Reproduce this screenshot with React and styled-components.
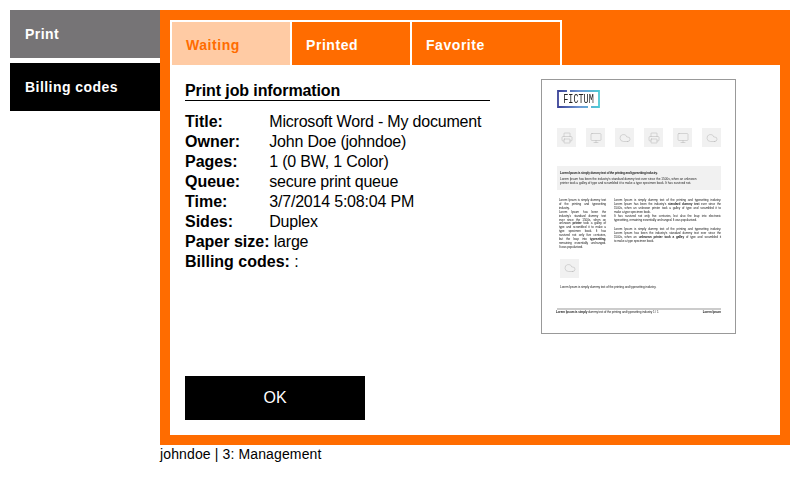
import React from "react";
import styled, { createGlobalStyle } from "styled-components";
import { Printer, Monitor, Cloud } from "lucide-react";

const GlobalStyle = createGlobalStyle`
  html, body {
    margin: 0;
    background: #fff;
    font-family: "Liberation Sans", Arial, sans-serif;
    color: #000;
  }
`;

const Page = styled.div`
  width: 800px;
  height: 480px;
  box-sizing: border-box;
  padding: 10px;
  display: flex;
  overflow: hidden;
`;

const Sidebar = styled.nav`
  width: 150px;
  display: flex;
  flex-direction: column;
  gap: 5px;
`;

const NavItem = styled.div`
  height: 48px;
  box-sizing: border-box;
  padding: 16px 0 0 15px;
  font-size: 14px;
  line-height: 16px;
  font-weight: bold;
  letter-spacing: 0.45px;
  color: #fff;
  background: ${(p) => (p.$active ? "#767476" : "#000")};
`;

const Main = styled.div`
  width: 630px;
`;

const Card = styled.div`
  height: 435px;
  box-sizing: border-box;
  border: 10px solid #ff6c00;
  background: #fff;
  display: flex;
  flex-direction: column;
`;

const Tabs = styled.div`
  height: 45px;
  flex: none;
  display: flex;
  background: #ff6c00;
`;

const Tab = styled.div`
  width: ${(p) => p.$width}px;
  box-sizing: border-box;
  padding: 15px 0 0 14px;
  border-top: 2px solid #fff;
  border-right: 2px solid #fff;
  border-left: ${(p) => (p.$first ? "2px solid #fff" : "0")};
  font-size: 14px;
  line-height: 16px;
  font-weight: bold;
  letter-spacing: 0.55px;
  color: ${(p) => (p.$active ? "#ff6c00" : "#fff")};
  background: ${(p) => (p.$active ? "#ffcba4" : "#ff6c00")};
`;

const Body = styled.div`
  flex: 1;
  display: flex;
  padding: 16px 0 0 15px;
`;

const Info = styled.div`
  width: 305px;
  flex: none;
  display: flex;
  flex-direction: column;
`;

const Heading = styled.h2`
  margin: 0 0 11px;
  height: 19px;
  border-bottom: 1px solid #000;
  font-size: 16px;
  line-height: 20px;
  font-weight: bold;
  letter-spacing: -0.1px;
`;

const Row = styled.div`
  font-size: 16px;
  line-height: 20px;
  letter-spacing: -0.2px;
  white-space: nowrap;
`;

const Label = styled.b`
  display: inline-block;
  min-width: 80px;
  letter-spacing: 0;
`;

const OkButton = styled.button`
  width: 180px;
  height: 44px;
  margin-top: auto;
  margin-bottom: 15px;
  border: 0;
  padding: 0;
  background: #000;
  color: #fff;
  font-family: inherit;
  font-size: 16px;
`;

const UserLine = styled.div`
  margin-top: 1px;
  font-size: 14px;
  line-height: 16px;
  letter-spacing: 0.13px;
`;

/* the job preview, a shrunk down A4 page */
const Preview = styled.div`
  width: 195px;
  height: 255px;
  flex: none;
  box-sizing: border-box;
  margin-left: 51px;
  margin-top: -2px;
  border: 1px solid #999;
  padding: 10px 14px 0 15px;
  display: flex;
  flex-direction: column;
  color: #222;
  font-size: 3.1px;
  line-height: 4px;
  overflow: hidden;
`;

const Shrunk = styled.div`
  display: flex;
  flex-direction: column;
  filter: blur(0.3px);
`;

const LogoArt = styled.svg`
  display: block;
  width: 43px;
  height: 18px;
`;

const IconRow = styled.div`
  margin-top: 20px;
  display: flex;
  gap: 10px;
`;

const IconBox = styled.div`
  width: 19px;
  height: 19px;
  display: flex;
  align-items: center;
  justify-content: center;
  background: #f1f1f1;
  color: #b4b4b4;
`;

const Band = styled.div`
  margin-top: 19px;
  height: 24px;
  box-sizing: border-box;
  padding: 5px 22px 0 3px;
  background: #f1f1f1;
`;

const Lead = styled.div`
  font-weight: bold;
  letter-spacing: -0.18px;
  margin-bottom: 2px;
`;

const Columns = styled.div`
  margin-top: 9px;
  padding-left: 2px;
  display: flex;
  gap: 8px;
  line-height: 3.9px;
  letter-spacing: -0.1px;
`;

const NarrowCol = styled.div`
  width: 47px;
  flex: none;
`;

const WideCol = styled.div`
  width: 107px;
  flex: none;
`;

const Line = styled.div`
  text-align-last: ${(p) => (p.$short ? "left" : "justify")};
  margin-bottom: ${(p) => p.$gap || 0}px;
`;

const SoloIcon = styled(IconBox)`
  margin: 9px 0 0 3px;
`;

const Caption = styled.div`
  margin: 7px 0 0 3px;
  letter-spacing: -0.07px;
`;

const PageRule = styled.div`
  margin-top: 19px;
  height: 2px;
  background: #ccc;
`;

const PageFoot = styled.div`
  margin-left: -1px;
  display: flex;
  justify-content: space-between;
  white-space: nowrap;
  letter-spacing: -0.1px;
`;

const Logo = () => (
  <LogoArt viewBox="0 0 43 18">
    <defs>
      <linearGradient id="fictumFrame" x1="0" x2="1" y1="0" y2="0">
        <stop offset="0" stopColor="#3b4397" />
        <stop offset="0.55" stopColor="#6f9ad6" />
        <stop offset="1" stopColor="#4cc9d3" />
      </linearGradient>
    </defs>
    <path
      d="M10 1H1V17H31M34 17H42V1H13"
      fill="none"
      stroke="url(#fictumFrame)"
      strokeWidth="1.8"
    />
    <text
      transform="translate(21.5 13) scale(0.68 1)"
      textAnchor="middle"
      fontFamily="Liberation Mono, monospace"
      fontSize="12.5"
      fill="#222"
    >
      FICTUM
    </text>
  </LogoArt>
);

const icons = [Printer, Monitor, Cloud, Printer, Monitor, Cloud];

const rows = [
  ["Title:", "Microsoft Word - My document"],
  ["Owner:", "John Doe (johndoe)"],
  ["Pages:", "1 (0 BW, 1 Color)"],
  ["Queue:", "secure print queue"],
  ["Time:", "3/7/2014 5:08:04 PM"],
  ["Sides:", "Duplex"],
  ["Paper size:", "large"],
  ["Billing codes:", ":"],
];

const App = () => {
  return (
    <Page>
      <GlobalStyle />
      <Sidebar>
        <NavItem $active>Print</NavItem>
        <NavItem>Billing codes</NavItem>
      </Sidebar>
      <Main>
        <Card>
          <Tabs>
            <Tab $first $active $width={122}>Waiting</Tab>
            <Tab $width={120}>Printed</Tab>
            <Tab $width={150}>Favorite</Tab>
          </Tabs>
          <Body>
            <Info>
              <Heading>Print job information</Heading>
              {rows.map(([label, value]) => (
                <Row key={label}>
                  <Label>{label}</Label> {value}
                </Row>
              ))}
              <OkButton>OK</OkButton>
            </Info>
            <Preview>
              <Shrunk>
                <Logo />
                <IconRow>
                  {icons.map((Icon, i) => (
                    <IconBox key={i}>
                      <Icon size={12} strokeWidth={1} />
                    </IconBox>
                  ))}
                </IconRow>
                <Band>
                  <Lead>Lorem Ipsum is simply dummy text of the printing and typesetting industry.</Lead>
                  Lorem Ipsum has been the industry's standard dummy text ever since the 1500s, when an unknown printer took a galley of type and scrambled it to make a type specimen book. It has survived not.
                </Band>
                <Columns>
                  <NarrowCol>
                    <Line>Lorem Ipsum is simply dummy text</Line>
                    <Line>of the printing and typesetting</Line>
                    <Line $short>industry.</Line>
                    <Line>Lorem Ipsum has been the</Line>
                    <Line>industry's standard dummy text</Line>
                    <Line>ever since the 1500s, when an</Line>
                    <Line>unknown <b>printer</b> took a galley of</Line>
                    <Line>type and scrambled it to make a</Line>
                    <Line>type specimen book. It has</Line>
                    <Line>survived not only five centuries,</Line>
                    <Line>but the leap into <b>typesetting</b>,</Line>
                    <Line>remaining essentially unchanged.</Line>
                    <Line $short>It was popularised.</Line>
                  </NarrowCol>
                  <WideCol>
                    <Line>Lorem Ipsum is simply dummy text of the printing and typesetting industry.</Line>
                    <Line>Lorem Ipsum has been the industry's <b>standard dummy text</b> ever since the</Line>
                    <Line>1500s, when an unknown printer took a galley of type and scrambled it to</Line>
                    <Line $short>make a type specimen book.</Line>
                    <Line>It has survived not only five centuries, but also the leap into electronic</Line>
                    <Line $short $gap={6}>typesetting, remaining essentially unchanged. It was popularised.</Line>
                    <Line>Lorem Ipsum is simply dummy text of the printing and typesetting industry.</Line>
                    <Line>Lorem Ipsum has been the industry's standard dummy text ever since the</Line>
                    <Line>1500s, when an <b>unknown printer took a galley</b> of type and scrambled it</Line>
                    <Line $short>to make a type specimen book.</Line>
                  </WideCol>
                </Columns>
                <SoloIcon>
                  <Cloud size={12} strokeWidth={1} />
                </SoloIcon>
                <Caption>Lorem Ipsum is simply dummy text of the printing and typesetting industry.</Caption>
                <PageRule />
                <PageFoot>
                  <span><b>Lorem Ipsum is simply</b> dummy text of the printing and typesetting industry 1 / 1</span>
                  <b>Lorem Ipsum</b>
                </PageFoot>
              </Shrunk>
            </Preview>
          </Body>
        </Card>
        <UserLine>johndoe | 3: Management</UserLine>
      </Main>
    </Page>
  );
};

export default App;
